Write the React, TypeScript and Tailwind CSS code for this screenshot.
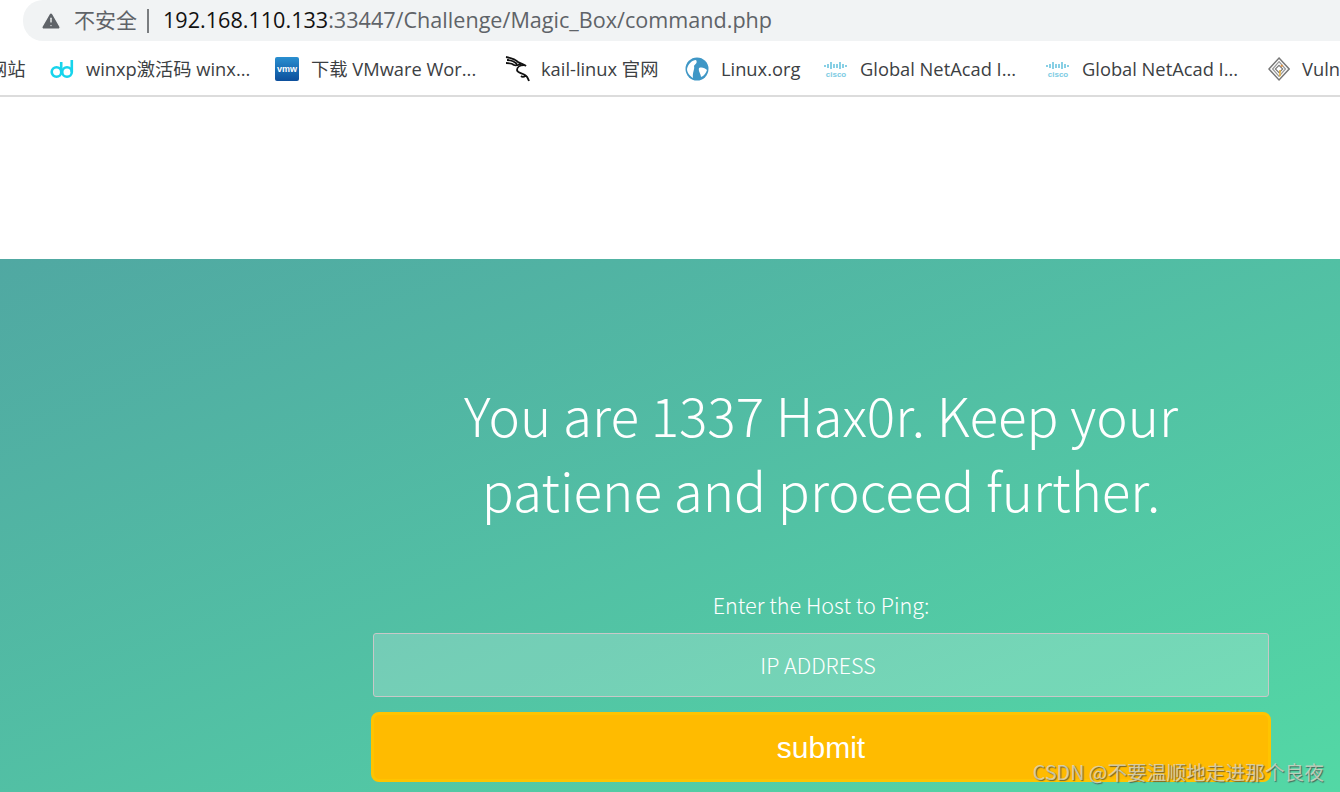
import { TriangleAlert } from "lucide-react";

const cjk = "font-['Noto_Sans_CJK_SC','Noto_Sans',sans-serif]";
const ui = "font-['Open_Sans','Noto_Sans_CJK_SC',sans-serif]";

function Dd() {
  return (
    <svg width="24" height="22" viewBox="0 0 24 22" fill="none" stroke="#17d4ec" strokeWidth="2.6">
      <circle cx="6.5" cy="14" r="4.8" />
      <circle cx="17" cy="14" r="4.8" />
      <path d="M11.2 14V4M21.8 14V2" />
    </svg>
  );
}
function Vmw() {
  return (
    <div className="w-6 h-6 rounded-[2px] bg-gradient-to-b from-[#2a8fd0] to-[#0d4f9c] flex items-center justify-center text-white text-[9px] font-bold leading-none font-['Liberation_Sans',sans-serif]">
      vmw
    </div>
  );
}
function Kali() {
  return (
    <svg width="26" height="26" viewBox="0 0 26 26" fill="none" stroke="#111" strokeWidth="1.8">
      <path d="M1 1c5 1 9 2 12 5 3 2 6 2 8 4M2 4c4 0 7 1 10 4M1 7c3 0 6 0 8 2 2 1 4 0 7-1" />
      <path d="M19 9c-4 0-7 2-7 5 0 3 5 3 8 5 2 1 3 3 4 6M16 20c1 1 3 1 4 0" />
    </svg>
  );
}
function Globe() {
  return (
    <svg width="24" height="24" viewBox="0 0 24 24">
      <circle cx="12" cy="12" r="11.5" fill="#3f97c6" />
      <path d="M2 12c1-5 5-9 9-9 2 3-1 4-2 6 1 3-2 7-1 12-3-2-6-5-6-9z" fill="#fff" />
      <path d="M14 11c3-1 6 0 8 2-1 3-3 6-6 7 0-3-3-6-2-9z" fill="#fff" />
    </svg>
  );
}
function Cisco() {
  return (
    <div className="w-6 flex flex-col items-center gap-[1px]">
      <svg width="24" height="9" viewBox="0 0 24 9" stroke="#7ccbe3" strokeWidth="1.8">
        <path d="M1 4v2M4 3v4M7 1v7M10 3v4M13 3v4M16 1v7M19 3v4M22 4v2" />
      </svg>
      <div className="text-[8px] leading-[7px] font-bold text-[#7ccbe3] font-['Liberation_Sans',sans-serif]">cisco</div>
    </div>
  );
}
function Vuln() {
  return (
    <svg width="24" height="26" viewBox="0 0 24 26" fill="none">
      <path d="M12 1l11 12-11 12L1 13z" stroke="#777" strokeWidth="1.6" />
      <path d="M12 5l7 8-7 8-7-8z" stroke="#999" strokeWidth="1.4" />
      <path d="M12 9l4 4-4 4-4-4z" stroke="#777" strokeWidth="1.2" />
      <path d="M14 10l2-1" stroke="#e8913a" strokeWidth="2" />
      <path d="M13 14v7" stroke="#e8b13a" strokeWidth="1.6" />
    </svg>
  );
}

function Bookmark({ icon, label, className }: { icon: React.ReactNode; label: string; className: string }) {
  return (
    <div className={`flex items-center shrink-0 ${className}`}>
      {icon}
      <span className="whitespace-nowrap">{label}</span>
    </div>
  );
}

export default function App() {
  return (
    <div className={`w-[1340px] h-[792px] overflow-hidden relative bg-white flex flex-col ${cjk}`}>
      <header className="h-[41px] shrink-0 pl-[23px] bg-white">
        <div className={`h-full bg-[#f1f3f4] rounded-l-[20px] flex items-center pl-[17px] text-[21px] text-[#5f6368] ${ui}`}>
          <TriangleAlert size={22} fill="#5f6368" stroke="#f1f3f4" strokeWidth={1.5} />
          <span className="ml-[12px] whitespace-nowrap">不安全</span>
          <span className="ml-[10px] mr-[14px] w-[2px] h-[24px] bg-[#7a7d80]" />
          <span className="text-[21.6px] text-[#111] whitespace-nowrap">192.168.110.133</span>
          <span className="text-[21.6px] whitespace-nowrap">:33447/Challenge/Magic_Box/command.php</span>
        </div>
      </header>
      <nav className={`h-[56px] shrink-0 border-b-2 border-[#dcdcdc] flex items-center pt-[2px] text-[18.3px] text-[#3c4043] overflow-hidden ${ui}`}>
        <span className="ml-[-11px] w-[61px] shrink-0 whitespace-nowrap">网站</span>
        <Bookmark className="w-[225px] gap-[12px]" icon={<Dd />} label="winxp激活码 winx..." />
        <Bookmark className="w-[230px] gap-[12px]" icon={<Vmw />} label="下载 VMware Wor..." />
        <Bookmark className="w-[180px] gap-[10px]" icon={<Kali />} label="kail-linux 官网" />
        <Bookmark className="w-[139px] gap-[12px]" icon={<Globe />} label="Linux.org" />
        <Bookmark className="w-[222px] gap-[12px]" icon={<Cisco />} label="Global NetAcad I..." />
        <Bookmark className="w-[222px] gap-[12px]" icon={<Cisco />} label="Global NetAcad I..." />
        <Bookmark className="w-[72px] gap-[12px]" icon={<Vuln />} label="Vuln" />
      </nav>
      <div className="h-[162px] shrink-0 bg-white" />
      <main className="flex-1 bg-gradient-to-br from-[#50a8a2] to-[#53d8a5] pl-[371px] pr-[69px] pt-[118px] text-white text-center">
        <h1 className="text-[53px] leading-[75px] font-extralight">
          You are 1337 Hax0r. Keep your<br />patiene and proceed further.
        </h1>
        <form className="mt-[63px] flex flex-col items-center">
          <label className="text-[21.6px] leading-[30px] font-light">Enter the Host to Ping:</label>
          <div className="mt-[13px] w-[896px] h-[64px] rounded-[3px] border border-[#c8c8c8] bg-white/20 flex items-center justify-center pr-[6px] text-[21.5px] font-light">
            IP ADDRESS
          </div>
          <button type="button" className="mt-[15px] w-[900px] h-[70px] rounded-[8px] border-[3px] border-[#ffc400] bg-[#ffbb00] text-[30px] font-['Liberation_Sans',sans-serif]">
            submit
          </button>
        </form>
      </main>
      <div className="absolute right-[16px] bottom-[5px] text-[19.7px] leading-[30px] text-[#d8d8c8]/80 [text-shadow:1px_1px_1px_rgba(60,60,60,0.7)] whitespace-nowrap">
        CSDN @不要温顺地走进那个良夜
      </div>
    </div>
  );
}
